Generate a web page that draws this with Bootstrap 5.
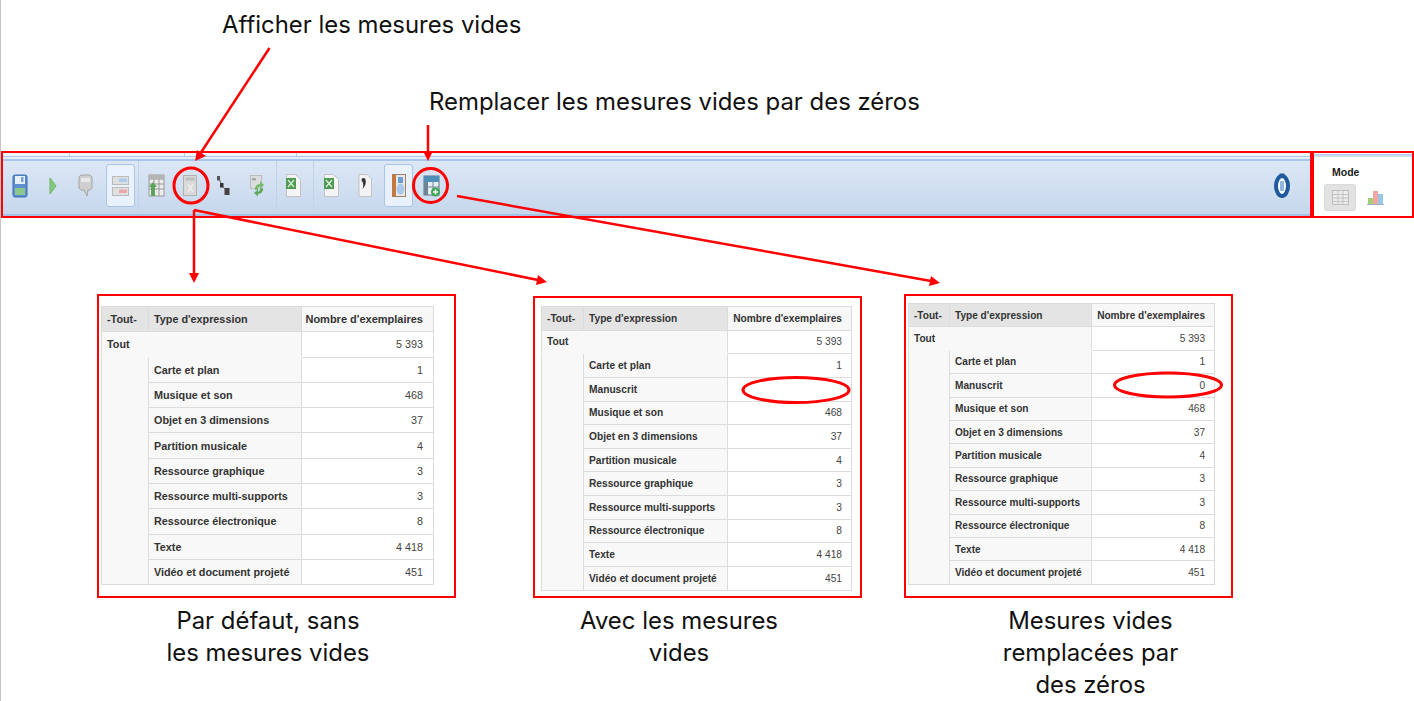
<!DOCTYPE html>
<html lang="fr">
<head>
    <meta charset="UTF-8">
    <title>Mesures vides</title>
    <link rel="stylesheet" href="https://cdn.jsdelivr.net/npm/bootstrap@5.3.0/dist/css/bootstrap.min.css">
    <style>
        html, body { background: #fff; }
        .shot-page { position: relative; width: 1414px; height: 701px; overflow: hidden; border-left: 1px solid #c4c4c4; font-family: Inter, "Noto Sans", sans-serif; color: #111; }
        .note-text { font-size: 23.9px; line-height: 32px; white-space: nowrap; }
        .note-one { height: 48px; padding: 9px 0 0 221px; }
        .note-two { height: 103px; padding: 38px 0 0 428px; }
        .tool-frame { height: 67px; }
        .tool-main { width: 1311px; height: 67px; border: 2px solid #f00; background: #fff; }
        .tool-strip { height: 4px; border-bottom: 1px solid #b0c9ea; background: #f1f5fb; }
        .tool-tick { width: 1px; height: 100%; background: #b6cdec; }
        .tool-tick:nth-child(1) { margin-left: 66px; }
        .tool-tick:nth-child(2) { margin-left: 114px; }
        .tool-tick:nth-child(3) { margin-left: 111px; }
        .tool-gap { height: 4px; background: #e6eef8; border-bottom: 2px solid #a9c5ea; }
        .tool-bar { height: 55px; padding-bottom: 4px; background: linear-gradient(#dce7f6, #c6d7ec); border-bottom: 2px solid #a6c2e6; }
        .tool-bar svg { filter: blur(0.35px); }
        .tool-slot { height: 100%; flex: none; }
        .tool-w32 { width: 32px; }
        .tool-w33 { width: 33px; }
        .tool-w34 { width: 34px; }
        .tool-w35 { width: 35px; }
        .tool-w36 { width: 36px; }
        .tool-w37 { width: 37px; }
        .tool-sep { border-left: 1px solid #c3d2e6; }
        .tool-on { width: 29px; height: 43px; background: #e9f1fc; border: 1px solid #aac5e8; border-radius: 3px; }
        .icon-nudge { margin-right: 5px; }
        .mode-box { width: 102px; height: 67px; border: 2px solid #f00; background: #fff; }
        .mode-line { height: 3px; margin-top: 1px; background: #cfdff3; border-top: 1px solid #b5cdec; }
        .mode-title { font: bold 10.500px/12px "Liberation Sans", sans-serif; padding: 9px 0 0 18px; color: #1a1a1a; height: 27px; }
        .mode-btn { width: 32px; height: 27px; background: #e2e2e2; border: 1px solid #dadada; border-radius: 3px; margin-left: 10px; }
        .mode-chart { margin-left: 11px; }
        .shot-panels { height: 0; }
        .panel-col { flex: none; }
        .panel-red { border: 2px solid #f00; background: #fff; }
        .panel-a { width: 359px; margin-left: 96px; margin-top: 76px; }
        .panel-a .panel-red { height: 304px; padding: 10px 0 0 2px; }
        .panel-b { width: 329px; margin-left: 77px; margin-top: 78px; }
        .panel-b .panel-red { height: 302px; padding: 8px 0 0 6px; }
        .panel-c { width: 329px; margin-left: 42px; margin-top: 76px; }
        .panel-c .panel-red { height: 304px; padding: 7px 0 0 2px; }
        .pivot-grid { table-layout: fixed; border-collapse: collapse; margin: 0; font-family: "Liberation Sans", Arial, sans-serif; color: #333; }
        .pivot-grid td, .pivot-grid th { border: 1px solid #dcdcdc; padding: 0 0 0 5px; vertical-align: middle; background: #f8f8f8; color: #333; box-shadow: none; overflow: hidden; white-space: nowrap; }
        .pivot-grid th.grey-head { background: #e4e4e4; }
        .pivot-grid th.light-head { background: #f7f7f7; text-align: right; padding: 0 9px 0 0; }
        .pivot-grid td.val-cell { background: #fff; text-align: right; padding: 0 9px 0 0; font-weight: 400; color: #444; }
        .pivot-grid td { font-weight: 700; }
        .pivot-grid td.no-bottom { border-bottom-color: #f8f8f8; }
        .pivot-grid td.no-top { border-top-color: #f8f8f8; }
        .grid-a { width: 332px; font-size: 10.8px; }
        .grid-a th.light-head { font-size: 11px; padding-right: 10px; }
        .grid-a td.val-cell { padding-right: 10px; }
        .grid-a tr { height: 25.3px; }
        .grid-b { width: 310px; font-size: 10.2px; }
        .grid-b tr { height: 23.65px; }
        .grid-c { width: 306px; font-size: 10.1px; }
        .grid-c tr { height: 23.4px; }
        .cap-text { text-align: center; margin-top: 7px; }
        .cap-a { margin-left: -17px; }
        .cap-b { margin-left: -37px; }
        .cap-c { margin-left: 44px; }
        .notes-layer { position: absolute; left: -1px; top: 0; pointer-events: none; }
    </style>
</head>
<body class="m-0">
    <div class="shot-page">
        <div class="note-text note-one">Afficher les mesures vides</div>
        <div class="note-text note-two">Remplacer les mesures vides par des zéros</div>

        <div class="tool-frame d-flex">
            <div class="tool-main">
                <div class="tool-strip d-flex">
                    <span class="tool-tick"></span><span class="tool-tick"></span><span class="tool-tick"></span>
                </div>
                <div class="tool-gap"></div>
                <div class="tool-bar d-flex align-items-center" id="tool-bar">
                    <div class="tool-slot tool-w33 d-flex align-items-center justify-content-center">
                        <svg width="16" height="24" viewBox="0 0 16 24"><rect x="1" y="1" width="14" height="22" rx="2" fill="#5d8ed0" stroke="#3a6cb0"/><rect x="3" y="2" width="10" height="8" fill="#e6eef8"/><rect x="9" y="3" width="2.5" height="5" fill="#7c9fce"/><rect x="3" y="14" width="10" height="7" fill="#8cc68a"/></svg>
                    </div>
                    <div class="tool-slot tool-w33 d-flex align-items-center justify-content-center">
                        <svg width="8" height="18" viewBox="0 0 8 18"><polygon points="1,1 7,9 1,17" fill="#86c97e" stroke="#6bb564"/></svg>
                    </div>
                    <div class="tool-slot tool-w33 d-flex align-items-center justify-content-center">
                        <svg width="15" height="23" viewBox="0 0 15 23"><path d="M3 1h9l2 2v11l-2 2h-2l-1 6-3-6H3l-2-2V3z" fill="#cfcfcf" stroke="#a5a5a5"/><rect x="3" y="4" width="9" height="4" fill="#e8e8e8"/></svg>
                    </div>
                    <div class="tool-slot tool-w36 d-flex align-items-center justify-content-center">
                        <div class="tool-on d-flex align-items-center justify-content-center">
                            <svg width="17" height="21" viewBox="0 0 17 21"><rect x="0.5" y="1.5" width="16" height="8" fill="#e0e0e0" stroke="#bbb"/><rect x="7" y="3.5" width="8" height="3.5" fill="#a9cdec"/><rect x="0.5" y="12.5" width="16" height="8" fill="#e0e0e0" stroke="#bbb"/><rect x="7" y="14.5" width="8" height="3.5" fill="#eba8a8"/></svg>
                        </div>
                    </div>
                    <div class="tool-slot tool-w35 tool-sep d-flex align-items-center justify-content-center">
                        <svg width="17" height="23" viewBox="0 0 17 23"><rect x="1" y="1" width="15" height="21" fill="#ececec" stroke="#9a9a9a"/><path d="M1 5h15M1 10h15M1 15h15M6 5v17M11 5v17" stroke="#9a9a9a" fill="none"/><rect x="1" y="1" width="15" height="4" fill="#b5b5b5"/><path d="M5 8l4 5H7v9H3v-9H1z" fill="#5da45a"/></svg>
                    </div>
                    <div class="tool-slot tool-w33 d-flex align-items-center justify-content-center">
                        <svg width="14" height="21" viewBox="0 0 14 21"><rect x="0.5" y="0.5" width="13" height="20" fill="#d9d9d9" stroke="#b0b0b0"/><rect x="2.5" y="2.5" width="9" height="3" fill="#bdbdbd"/><path d="M5 9l5 8M10 9l-5 8" stroke="#f0f0f0" stroke-width="1.4"/></svg>
                    </div>
                    <div class="tool-slot tool-w33 d-flex align-items-center justify-content-center">
                        <svg width="14" height="21" viewBox="0 0 14 21"><path d="M3 3l3 8 5 5" stroke="#666" fill="none"/><rect x="1" y="1" width="3" height="4.500" fill="#555"/><rect x="4" y="8" width="3.500" height="4.500" fill="#333"/><rect x="8.500" y="13" width="5" height="7" fill="#444"/></svg>
                    </div>
                    <div class="tool-slot tool-w37 d-flex align-items-center justify-content-center">
                        <svg width="15" height="22" viewBox="0 0 15 22"><rect x="0.5" y="0.5" width="11" height="13" fill="#ddd" stroke="#bbb"/><rect x="2" y="3" width="4" height="2.5" fill="#aaa"/><path d="M5 15a5 5 0 0 1 5-6V6l4 4-4 4v-2.5a3 3 0 0 0-2 3.5z" fill="#74bb6f"/><path d="M13 13a5 5 0 0 1-5 6v2.500l-4-3.500 4-3.500V17a3 3 0 0 0 2-3z" fill="#5ea75a"/></svg>
                    </div>
                    <div class="tool-slot tool-w37 tool-sep d-flex align-items-center justify-content-center">
                        <svg class="icon-nudge" width="16" height="23" viewBox="0 0 16 23"><path d="M1.500 0.500h9l5 5v17h-14z" fill="#f5f5f5" stroke="#c2c2c2"/><rect x="1" y="4" width="10" height="11" fill="#4f9a52"/><path d="M3 6l6 7M9 6l-6 7" stroke="#d9efd8" stroke-width="1.300"/></svg>
                    </div>
                    <div class="tool-slot tool-w35 tool-sep d-flex align-items-center justify-content-center">
                        <svg width="16" height="23" viewBox="0 0 16 23"><path d="M1.500 0.500h9l5 5v17h-14z" fill="#f5f5f5" stroke="#c2c2c2"/><rect x="1" y="4" width="10" height="11" fill="#4f9a52"/><path d="M3 6l6 7M9 6l-6 7" stroke="#d9efd8" stroke-width="1.300"/></svg>
                    </div>
                    <div class="tool-slot tool-w34 d-flex align-items-center justify-content-center">
                        <svg width="14" height="23" viewBox="0 0 14 23"><path d="M1 0.500h8l4.500 4.500v17.500H1z" fill="#f2f2f2" stroke="#c2c2c2"/><circle cx="5.500" cy="6" r="2" fill="#333"/><path d="M7.500 6c1 4-1 7-3 9 1-3 1-5 0-7z" fill="#333"/></svg>
                    </div>
                    <div class="tool-slot tool-w33 d-flex align-items-center justify-content-center">
                        <div class="tool-on d-flex align-items-center justify-content-center">
                            <svg width="14" height="23" viewBox="0 0 14 23"><rect x="0.500" y="0.500" width="13" height="22" fill="#e8e8e8" stroke="#a08068"/><rect x="0.500" y="0.500" width="3.500" height="22" fill="#c9783c"/><rect x="6" y="3" width="5" height="6" fill="#6b9fd8"/><ellipse cx="8.500" cy="15" rx="3.800" ry="5.500" fill="#a9c9ea"/></svg>
                        </div>
                    </div>
                    <div class="tool-slot tool-w32 d-flex align-items-center justify-content-center">
                        <svg width="17" height="22" viewBox="0 0 17 22"><rect x="1" y="1" width="15" height="19" fill="#e7eef3" stroke="#5a7486"/><rect x="1" y="1" width="15" height="6" fill="#4d8fb6"/><rect x="1" y="7" width="4" height="13" fill="#6d8493"/><path d="M5 12h11M10 7v13" stroke="#6d8493" fill="none"/><circle cx="12.500" cy="17" r="4.500" fill="#3fa75a"/><path d="M12.500 14.500v5M10 17h5" stroke="#fff" stroke-width="1.400"/></svg>
                    </div>
                    <div class="ms-auto me-3 pe-1 d-flex align-items-center">
                        <svg width="16" height="25" viewBox="0 0 16 25"><ellipse cx="8" cy="13" rx="6" ry="10" fill="#fff" stroke="#1f5a9c" stroke-width="4"/><rect x="6" y="8" width="4" height="10" rx="1" fill="#8fb6dc"/><rect x="5.500" y="0.500" width="5" height="3" fill="#1f5a9c"/></svg>
                    </div>
                </div>
            </div>
            <div class="mode-box">
                <div class="mode-line"></div>
                <div class="mode-title">Mode</div>
                <div class="d-flex align-items-center">
                    <div class="mode-btn d-flex align-items-center justify-content-center">
                        <svg width="17" height="15" viewBox="0 0 17 15"><rect x="0.500" y="0.500" width="16" height="14" fill="#ececec" stroke="#bdbdbd"/><path d="M0 4.500h17M0 8h17M0 11.500h17M6 0v15M11 0v15" stroke="#c4c4c4"/></svg>
                    </div>
                    <svg class="mode-chart" width="17" height="15" viewBox="0 0 17 15"><rect x="1" y="8" width="5" height="6.500" fill="#a2cf78"/><rect x="6" y="1" width="5" height="13.500" fill="#f0a79f"/><rect x="11" y="4" width="5" height="10.500" fill="#97c6e8"/><path d="M0 14.500h17" stroke="#a3b0bc"/></svg>
                </div>
            </div>
        </div>

        <div class="shot-panels d-flex align-items-start">
            <div class="panel-col panel-a">
                <div class="panel-red"><table class="table pivot-grid grid-a" data-manuscrit="none"></table></div>
                <div class="note-text cap-text cap-a">Par défaut, sans<br>les mesures vides</div>
            </div>
            <div class="panel-col panel-b">
                <div class="panel-red"><table class="table pivot-grid grid-b" data-manuscrit=""></table></div>
                <div class="note-text cap-text cap-b">Avec les mesures<br>vides</div>
            </div>
            <div class="panel-col panel-c">
                <div class="panel-red"><table class="table pivot-grid grid-c" data-manuscrit="0"></table></div>
                <div class="note-text cap-text cap-c">Mesures vides<br>remplacées par<br>des zéros</div>
            </div>
        </div>

        <svg class="notes-layer" width="1414" height="701" viewBox="0 0 1414 701" fill="none">
            <g stroke="#f00" stroke-width="2.500">
                <line x1="269.500" y1="48" x2="200" y2="154"/>
                <line x1="428" y1="125" x2="428" y2="152"/>
                <line x1="194" y1="210" x2="194" y2="274"/>
                <line x1="194" y1="210" x2="538" y2="280"/>
                <line x1="457" y1="196" x2="931" y2="281"/>
                <ellipse cx="191" cy="185.500" rx="17" ry="17.500" stroke-width="3"/>
                <ellipse cx="430.500" cy="185.500" rx="17" ry="17" stroke-width="3"/>
                <ellipse cx="796" cy="390" rx="53" ry="12.500" stroke-width="3"/>
                <ellipse cx="1168" cy="385" rx="53.500" ry="12" stroke-width="3"/>
            </g>
            <g fill="#f00">
                <polygon points="195,161 197,150 206,156"/>
                <polygon points="428,161 423,151 433,151"/>
                <polygon points="194,283 189,273 199,273"/>
                <polygon points="547,282 536,285 538,275"/>
                <polygon points="940,283 929,286 931,276"/>
            </g>
        </svg>
    </div>

    <script src="https://cdn.jsdelivr.net/npm/bootstrap@5.3.0/dist/js/bootstrap.bundle.min.js"></script>
    <script>
        const rows = [
            ["Carte et plan", "1"],
            ["Manuscrit", null],
            ["Musique et son", "468"],
            ["Objet en 3 dimensions", "37"],
            ["Partition musicale", "4"],
            ["Ressource graphique", "3"],
            ["Ressource multi-supports", "3"],
            ["Ressource électronique", "8"],
            ["Texte", "4 418"],
            ["Vidéo et document projeté", "451"]
        ];
        const colWidths = { "grid-a": [47, 153, 132], "grid-b": [42, 144, 124], "grid-c": [41, 142, 123] };

        document.querySelectorAll(".pivot-grid").forEach(function (table) {
            const mode = table.dataset.manuscrit;
            const widths = colWidths[table.classList[2]];
            const shown = rows.filter(r => !(r[1] === null && mode === "none"));
            let html = "<colgroup>" + widths.map(w => `<col width="${w}">`).join("") + "</colgroup>";
            html += `<thead><tr><th class="grey-head">-Tout-</th><th class="grey-head">Type d'expression</th><th class="light-head">Nombre d'exemplaires</th></tr></thead><tbody>`;
            html += `<tr><td colspan="2" class="no-bottom">Tout</td><td class="val-cell">5 393</td></tr>`;
            shown.forEach(function (r, i) {
                const first = i === 0 ? `<td rowspan="${shown.length}" class="no-top"></td>` : "";
                html += `<tr>${first}<td>${r[0]}</td><td class="val-cell">${r[1] === null ? mode : r[1]}</td></tr>`;
            });
            table.innerHTML = html + "</tbody>";
        });
    </script>
</body>
</html>
